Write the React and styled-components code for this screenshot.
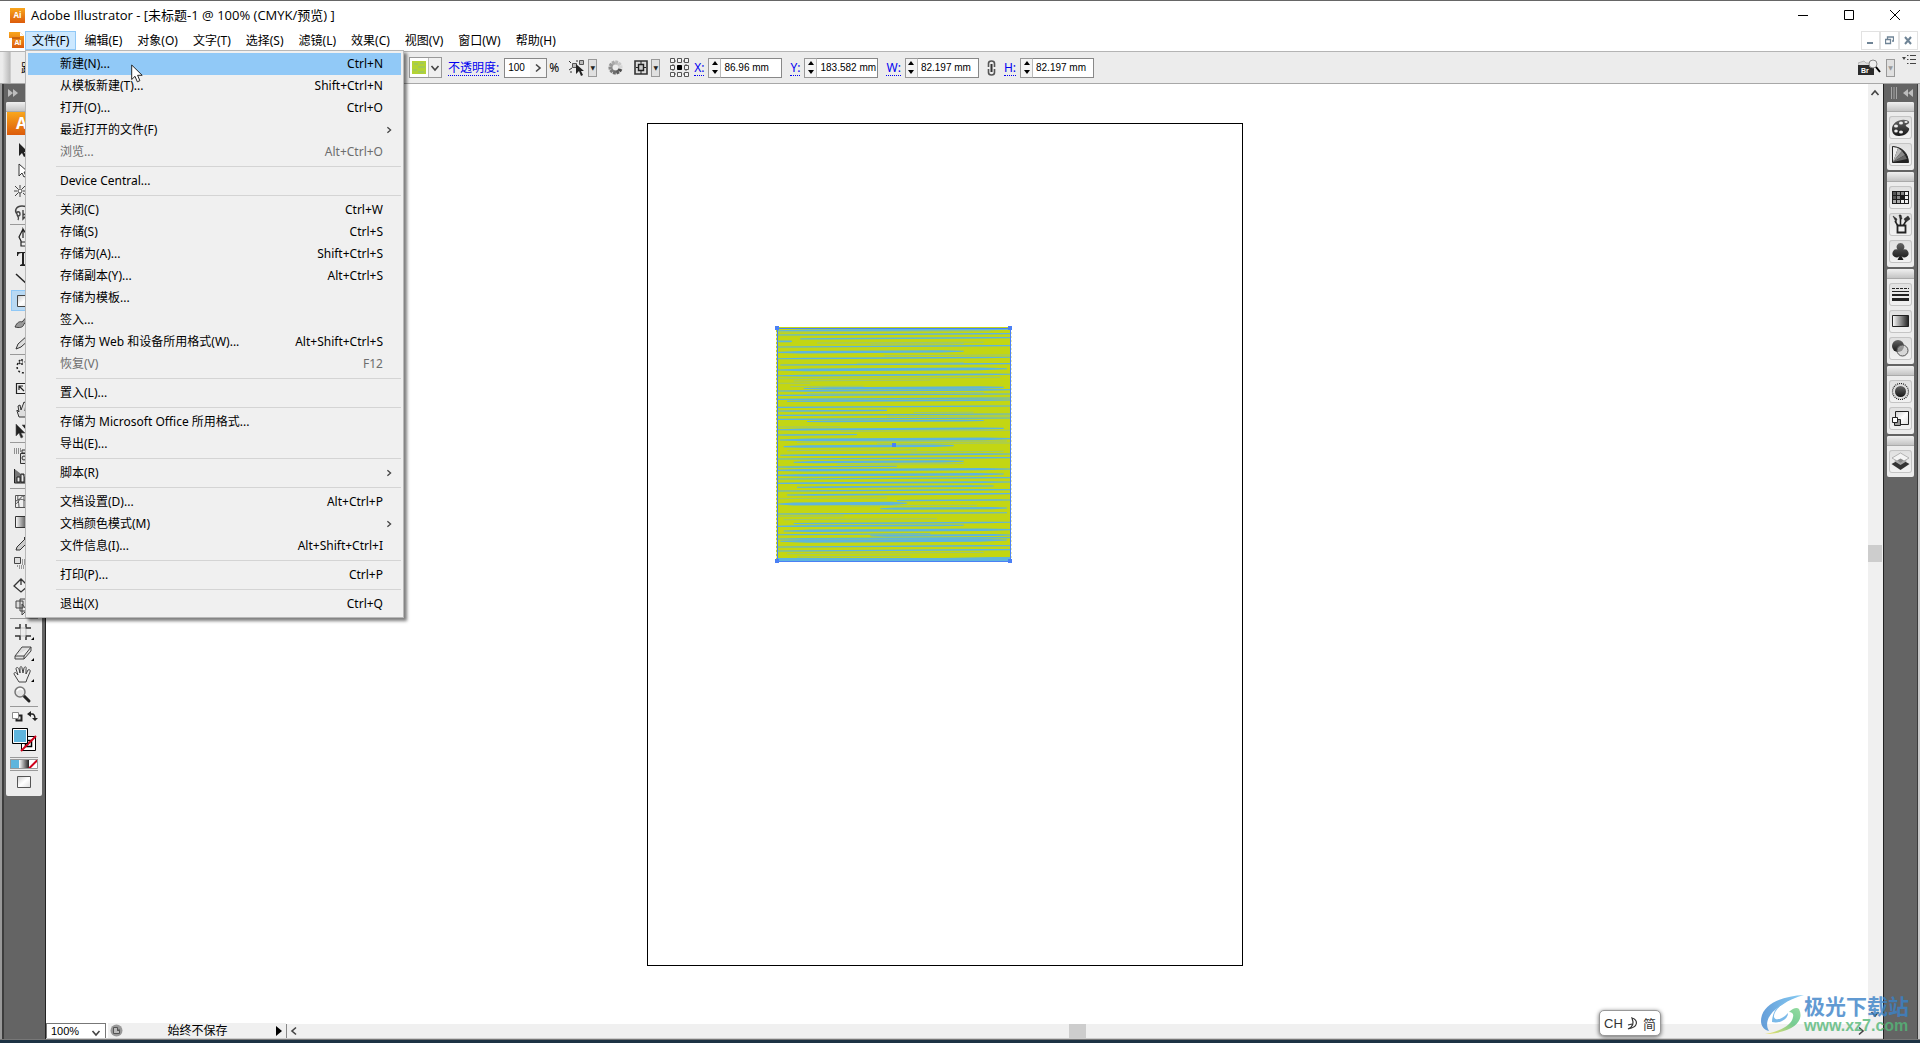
import React from 'react'
import styled, { createGlobalStyle } from 'styled-components'

const menus = [
  '文件(F)', '编辑(E)', '对象(O)', '文字(T)', '选择(S)',
  '滤镜(L)', '效果(C)', '视图(V)', '窗口(W)', '帮助(H)',
]

const fileMenu = [
  [
    { label: '新建(N)...', keys: 'Ctrl+N', active: true },
    { label: '从模板新建(T)...', keys: 'Shift+Ctrl+N' },
    { label: '打开(O)...', keys: 'Ctrl+O' },
    { label: '最近打开的文件(F)', sub: true },
    { label: '浏览...', keys: 'Alt+Ctrl+O', disabled: true },
  ],
  [{ label: 'Device Central...' }],
  [
    { label: '关闭(C)', keys: 'Ctrl+W' },
    { label: '存储(S)', keys: 'Ctrl+S' },
    { label: '存储为(A)...', keys: 'Shift+Ctrl+S' },
    { label: '存储副本(Y)...', keys: 'Alt+Ctrl+S' },
    { label: '存储为模板...' },
    { label: '签入...' },
    { label: '存储为 Web 和设备所用格式(W)...', keys: 'Alt+Shift+Ctrl+S' },
    { label: '恢复(V)', keys: 'F12', disabled: true },
  ],
  [{ label: '置入(L)...' }],
  [{ label: '存储为 Microsoft Office 所用格式...' }, { label: '导出(E)...' }],
  [{ label: '脚本(R)', sub: true }],
  [
    { label: '文档设置(D)...', keys: 'Alt+Ctrl+P' },
    { label: '文档颜色模式(M)', sub: true },
    { label: '文件信息(I)...', keys: 'Alt+Shift+Ctrl+I' },
  ],
  [{ label: '打印(P)...', keys: 'Ctrl+P' }],
  [{ label: '退出(X)', keys: 'Ctrl+Q' }],
]

// Drawn in a 26x21 box
const toolGroups = [
  [
    { name: '选择', art: <path d="M8 4v13l3-3 2 4 2-1-2-4h4z" fill="#222" /> },
    { name: '直接选择', art: <path d="M8 4v12l3-3 2 4 2-1-2-4h4z" fill="#fff" stroke="#333" /> },
    {
      name: '魔棒',
      art: (
        <g stroke="#444" fill="none">
          <path d="M9 4v3M9 12v4M3 10h3M12 10h4M4 5l3 3M14 5l-3 3M4 15l3-3M12 12l8 7" />
          <circle cx="9" cy="10" r="2" fill="#fff" />
        </g>
      ),
    },
    {
      name: '套索',
      art: <path d="M6 12c-3-3-1-8 5-8s9 3 7 7c-1 2-4 2-6 1M6 12c-1-3 3-3 3 0s-3 2-3 0c0 3 3 3 1 6M12 8v9l3-3" fill="none" stroke="#444" strokeWidth="1.4" />,
    },
  ],
  [
    {
      name: '钢笔',
      art: <path d="M12 2l-4 8 2 4v5h5v-5l2-4-5-8v9M10 15h5" fill="#eee" stroke="#222" strokeWidth="1.2" />,
    },
    { name: '文字', art: <path d="M6 4h12v4h-1c0-2-1-3-4-3v11l2 1v1H9v-1l2-1V5C8 5 7 6 7 8H6z" fill="#222" /> },
    { name: '直线段', art: <path d="M5 5l13 12" stroke="#222" strokeWidth="1.5" /> },
    { name: '矩形', on: true, art: <path d="M6.500 5.500h13v11h-13z" fill="url(#light)" stroke="#444" /> },
    { name: '画笔', art: <path d="M4 16c2-5 5-6 7-5l7-8 2 2-7 8c-1 4-5 4-9 3z" fill="#999" stroke="#222" strokeWidth=".8" /> },
    { name: '铅笔', art: <path d="M5 17l2-5L17 3l3 3-10 9z" fill="#ddd" stroke="#333" /> },
  ],
  [
    { name: '旋转', art: <path d="M7 6c-3 6 2 12 8 9s3-12-4-10M11 2v6L7 5z" fill="none" stroke="#222" strokeWidth="1.5" strokeDasharray="2 2" /> },
    { name: '比例缩放', art: <path d="M5.500 5.500h12v10h-12zM13 13L8 8M8 12V8h4" fill="#eee" stroke="#222" strokeWidth="1.2" /> },
    { name: '变形', art: <path d="M6 12l2 6h7l4-9-2-1-3 4 1-8-2-1-3 8-1-5-2 1 1 6-2-2z" fill="#ddd" stroke="#333" /> },
    { name: '自由变换', art: <path d="M5 4v12l3-3 2 5 2-1-2-4h4zM11 5h8v10" fill="#222" stroke="#555" strokeWidth=".6" /> },
  ],
  [
    {
      name: '符号喷枪',
      art: (
        <g stroke="#333" fill="#ddd">
          <path d="M3 4h7M3 6h7M3 8h5" strokeDasharray="1 1" />
          <path d="M9.500 8.500h8v10h-8zM11 5h5v3h-5z" />
          <circle cx="13" cy="13" r="2" />
        </g>
      ),
    },
    { name: '图表', art: <path d="M3.500 3v14H22M6 11h3v5H6zM10 8h3v8h-3zM15 5h3v11h-3z" fill="#777" stroke="#222" /> },
  ],
  [
    { name: '网格', art: <path d="M4.500 4.500h13v12h-13zM4 13c5-1 4-8 9-8M8 16c0-5-2-8-1-12M5 10c5-4 8 0 12 0M13 4v12" fill="#eee" stroke="#555" /> },
    { name: '渐变', art: <path d="M4.500 4.500h14v11h-14z" fill="url(#ramp)" stroke="#333" /> },
    { name: '吸管', art: <path d="M5 17l1-3 8-8 3 3-8 8zM13 5l3-3 4 4-3 3z" fill="#ccc" stroke="#333" /> },
    {
      name: '混合',
      art: (
        <g stroke="#444">
          <path d="M3.500 3.500h6v6h-6z" fill="#ddd" />
          <path d="M6 12h9M8 14h9M11 6h5M11 8h7M11 10h9" strokeDasharray="1 1" />
        </g>
      ),
    },
    { name: '实时上色', art: <path d="M3 11l7-7 7 7-7 6zM10 4v6M17 11c3 3 2 6 1 6s-2-2-1-6z" fill="#eee" stroke="#333" strokeWidth="1.3" /> },
    { name: '实时上色选择', art: <path d="M5 5h7v7H5zM9 3h7v12H9zM11 8v11l3-3 4 1z" fill="#ddd" stroke="#444" /> },
  ],
  [
    {
      name: '裁剪区域',
      corner: true,
      art: (
        <g fill="none">
          <path d="M4 7h5V3M4 15h5v4M20 7h-5V3M20 15h-5v4" stroke="#333" strokeWidth="1.5" />
          <path d="M9.500 8v6M15 8v6M10 7h5M10 15h5" stroke="#bbb" />
        </g>
      ),
    },
    { name: '橡皮擦', corner: true, art: <path d="M4 14l7-9h9l-7 9zM4 14v3h9l7-8V5M13 14v3" fill="#ddd" stroke="#444" strokeLinejoin="round" /> },
    {
      name: '抓手',
      corner: true,
      art: <path d="M8 19l-5-8c0-2 2-2 3 0l1 1-2-6c0-2 2-2 3 0l1 4V5c0-2 2-2 2 0l1 5 1-5c1-2 3-1 2 1v5l2-4c1-1 3 0 2 2l-3 7-1 3z" fill="#eee" stroke="#444" />,
    },
    {
      name: '缩放',
      art: (
        <g>
          <path d="M12 11l6 6" stroke="#222" strokeWidth="3" strokeLinecap="round" />
          <circle cx="9" cy="8" r="5" fill="#e4e4e4" stroke="#777" strokeWidth="1.5" />
          <path d="M6 7q3-4 6-1" stroke="#fff" fill="none" strokeWidth="1.5" />
        </g>
      ),
    },
  ],
]

// Drawn in a 23x23 box
const panelGroups = [
  [
    {
      name: '颜色',
      art: (
        <g>
          <path d="M3 13c0-6 7-10 13-9 2 0 5 1 4 3s-4 1-3 3 4 1 3 4-5 6-10 6-7-3-7-7z" fill="url(#dark)" />
          <g fill="#eee">
            <ellipse cx="7" cy="10" rx="2" ry="1.600" />
            <ellipse cx="12" cy="7" rx="2" ry="1.500" />
            <ellipse cx="17" cy="6" rx="1.600" ry="1.100" />
            <ellipse cx="7" cy="15" rx="1.800" ry="1.600" />
            <ellipse cx="12" cy="16" rx="2" ry="1.600" />
          </g>
        </g>
      ),
    },
    {
      name: '颜色参考',
      art: (
        <g>
          <path d="M3.500 3.500v16h16C19 10 13 4 3.500 3.500z" fill="#222" stroke="#222" />
          <path d="M4 19V4l5 1z" fill="#eee" />
          <path d="M4 19L9 5l4 3z" fill="#bbb" />
          <path d="M4 19l9-11 3 4z" fill="#888" />
          <path d="M4 19l12-7 2 4z" fill="#666" />
        </g>
      ),
    },
  ],
  [
    {
      name: '色板',
      art: (
        <g>
          <path d="M3 5h17v13H3z" fill="#1c1c1c" />
          <path d="M4 6h3v3H4zM4 10h3v3H4z" fill="#555" />
          <path d="M8 6h3v3H8zM12 6h3v3h-3zM8 10h3v3H8z" fill="#888" />
          <path d="M16 6h3v3h-3zM12 14h3v3h-3zM16 14h3v3h-3zM16 10h3v3h-3z" fill="#eee" />
          <path d="M4 14h3v3H4zM8 14h3v3H8z" fill="#aaa" />
        </g>
      ),
    },
    {
      name: '画笔',
      art: (
        <g stroke="#222" fill="#333">
          <path d="M9 13L6 8M11.500 13V6M14 13l3-5" strokeWidth="1.500" />
          <path d="M4 3l4 3-1 3zM10 2h2l1 4h-2zM15 6l4-3 2 3-4 3z" strokeWidth=".5" />
          <path d="M8.500 12.500h8v7h-8z" fill="#eee" strokeWidth="1.800" />
        </g>
      ),
    },
    {
      name: '符号',
      art: <path d="M11.500 3a4 4 0 0 1 3 6.500 4 4 0 1 1-2 6.500l2 4h-6l2-4a4 4 0 1 1-2-6.500 4 4 0 0 1 3-6.500z" fill="url(#dark)" />,
    },
  ],
  [
    {
      name: '描边',
      art: (
        <g stroke="#222">
          <path d="M3 5.500h17" strokeDasharray="3 1" />
          <path d="M3 8.500h17" />
          <path d="M3 12h17" strokeWidth="2" />
          <path d="M3 16.500h17" strokeWidth="3" />
        </g>
      ),
    },
    { name: '渐变', art: <path d="M3.500 5.500h16v11h-16z" fill="url(#ramp)" stroke="#222" /> },
    {
      name: '透明度',
      art: (
        <g>
          <circle cx="9" cy="9" r="6" fill="url(#dark)" />
          <circle cx="13.500" cy="13.500" r="5.500" fill="#ccc" fillOpacity=".65" stroke="#555" />
        </g>
      ),
    },
  ],
  [
    {
      name: '外观',
      art: (
        <g>
          <circle cx="11.500" cy="11.500" r="8" fill="#ddd" stroke="#222" strokeDasharray="1 1" strokeWidth="1.200" />
          <circle cx="11.500" cy="11.500" r="5.500" fill="url(#dark)" />
        </g>
      ),
    },
    {
      name: '图形样式',
      art: (
        <g stroke="#222">
          <path d="M6.500 4.500h13v13h-13z" fill="url(#light)" />
          <path d="M5.500 12.500h6v6h-6z" fill="#999" />
          <path d="M3.500 10.500h5v5h-5z" fill="#fff" />
        </g>
      ),
    },
  ],
  [
    {
      name: '图层',
      art: (
        <g>
          <path d="M2.500 14l9-5 9 5-9 6z" fill="#333" />
          <path d="M5 11l6.500-4 6.500 4-6.500 4z" fill="#aaa" />
          <path d="M3 8l8.500-5L20 8l-8.500 5z" fill="#f4f4f4" stroke="#999" strokeWidth=".7" />
          <path d="M8 10.500l3.500-2 3.500 2-3.500 2.500z" fill="#888" />
        </g>
      ),
    },
  ],
]

// [y, start, end, thickness, faint]
const strands = [
  [6, 0, 700, 5], [10, 0, 640, 2, 1], [19, 0, 700, 3], [31, 70, 700, 3], [38, 4, 45, 4], [44, 120, 620, 3, 1],
  [48, 280, 560, 2, 1], [55, 0, 700, 3], [71, 4, 560, 6], [83, 320, 700, 3, 1], [90, 0, 700, 3],
  [105, 240, 560, 2, 1], [109, 10, 700, 3], [124, 0, 690, 7], [141, 0, 700, 4], [150, 0, 670, 3, 1],
  [157, 50, 460, 3, 1], [164, 0, 100, 2, 1], [174, 40, 260, 3, 1],
  [180, 80, 680, 6], [187, 0, 700, 4], [195, 90, 620, 2, 1], [200, 0, 700, 3], [212, 0, 700, 3], [218, 30, 700, 4],
  [236, 0, 700, 3], [247, 0, 330, 3], [254, 410, 590, 2, 1], [260, 0, 700, 3],
  [266, 330, 700, 3, 1], [272, 0, 700, 3], [279, 90, 620, 4], [295, 0, 190, 3, 1],
  [303, 0, 680, 5], [309, 190, 700, 3, 1], [319, 0, 240, 3], [334, 8, 700, 7], [341, 60, 690, 2, 1],
  [347, 300, 700, 4, 1], [354, 20, 530, 6], [366, 30, 420, 2, 1], [372, 400, 680, 2, 1], [380, 10, 700, 4],
  [391, 0, 700, 3], [401, 50, 560, 5], [408, 180, 560, 2, 1], [415, 0, 360, 3], [425, 0, 700, 6],
  [440, 0, 680, 6], [451, 0, 700, 3], [464, 0, 700, 4],
  [476, 60, 650, 4], [487, 0, 700, 3], [499, 30, 700, 4], [510, 0, 330, 2, 1], [518, 360, 700, 3],
  [526, 4, 390, 8], [533, 220, 600, 3, 1], [542, 310, 690, 6], [556, 0, 690, 3], [563, 0, 200, 3, 1],
  [573, 20, 480, 3, 1], [585, 50, 700, 3], [593, 0, 560, 4], [607, 20, 700, 6], [618, 0, 460, 3],
  [623, 280, 700, 5], [631, 0, 700, 4], [638, 10, 690, 8], [655, 0, 700, 3],
  [667, 0, 700, 3], [675, 30, 620, 4, 1], [685, 60, 400, 2, 1],
]

// a flat stroke that rises a little to the right and thins out at both ends
const strandPath = ([y, a, b, t, faint]) => {
  const at = (x) => y + (350 - x) / 170
  const h = faint ? 1.5 : t / 2 + 0.6
  const p = a + (b - a) * 0.12
  const q = b - (b - a) * 0.12
  const tip = Math.min(h, 1.6)
  return `M${a} ${at(a) - tip}L${p} ${at(p) - h}L${q} ${at(q) - h}L${b} ${at(b) - tip}V${at(b) + tip}L${q} ${at(q) + h}L${p} ${at(p) + h}L${a} ${at(a) + tip}z`
}

const Chevron = ({ turn = 0, size = 10, color = '#444' }) => (
  <svg width={size} height={size} viewBox="0 0 10 10">
    <path d="M1.500 3l3.500 4 3.500-4" fill="none" stroke={color} strokeWidth="1.600" transform={`rotate(${turn} 5 5)`} />
  </svg>
)

const AiMark = () => (
  <svg width="15" height="15" viewBox="0 0 15 15">
    <rect width="15" height="15" fill="url(#orange)" />
    <text x="7.500" y="10" textAnchor="middle" fontSize="8" fontWeight="700" fill="#fff" fontFamily="Open Sans, sans-serif">Ai</text>
  </svg>
)

const UnitField = ({ id, label, value }) => (
  <Unit>
    <BlueLabel htmlFor={id}>{label}:</BlueLabel>
    <Stepper>
      <StepButton aria-label={`${label} 增加`}><svg width="6" height="4"><path d="M0 4l3-4 3 4z" /></svg></StepButton>
      <StepButton aria-label={`${label} 减少`}><svg width="6" height="4"><path d="M0 0l3 4 3-4z" /></svg></StepButton>
    </Stepper>
    <UnitInput id={id} defaultValue={value} />
  </Unit>
)

const FileMenu = () => (
  <Dropdown role="menu">
    {fileMenu.map((group, i) => (
      <MenuGroup key={i}>
        {group.map((item) => (
          <MenuRow key={item.label} role="menuitem" $active={item.active} disabled={item.disabled}>
            <span>{item.label}</span>
            {item.keys && <span>{item.keys}</span>}
            {item.sub && <SubArrow><Chevron turn={-90} size={8} /></SubArrow>}
          </MenuRow>
        ))}
      </MenuGroup>
    ))}
  </Dropdown>
)

const Toolbox = () => (
  <ToolPanel>
    <Grip />
    <ToolLogo>Ai</ToolLogo>
    {toolGroups.map((group, i) => (
      <ToolGroup key={i}>
        {group.map((tool) => (
          <ToolButton key={tool.name} aria-label={tool.name} $on={tool.on}>
            <svg width="26" height="21" viewBox="0 0 26 21" fill="none">
              {tool.art}
              {tool.corner && <path d="M23 16v3h-3z" fill="#000" />}
            </svg>
          </ToolButton>
        ))}
      </ToolGroup>
    ))}
    <Swatches>
      <svg width="28" height="46" viewBox="0 0 28 46">
        <path d="M6.500 5.500h5v5h-5z" fill="#ddd" stroke="#222" strokeWidth="2" />
        <path d="M2.500 2.500h6v6h-6z" fill="#fff" stroke="#888" />
        <path d="M20 4h2q3 0 3 5" fill="none" stroke="#222" strokeWidth="1.400" />
        <path d="M21 1v6l-4-3zM22 8h6l-3 3z" fill="#222" />
        <path d="M11.500 26.500h14v14h-14z" fill="#fff" stroke="#000" />
        <path d="M15.500 30.500h6v6h-6z" fill="none" stroke="#000" strokeWidth="1.500" />
        <path d="M11 41l15-15" stroke="#d0021b" strokeWidth="2" />
        <path d="M2.500 18.500h15v15h-15z" fill="#5fb5dd" stroke="#000" />
        <path d="M3.500 19.500h13v13h-13z" fill="none" stroke="#fff" />
      </svg>
    </Swatches>
    <Swatches>
      <svg width="28" height="10" viewBox="0 0 28 10">
        <path d="M0 0h9v10H0z" fill="#5fb5dd" />
        <path d="M9 0h10v10H9z" fill="url(#ramp)" />
        <path d="M19 0h9v10h-9z" fill="#fff" />
        <path d="M19 9.500l9-9" stroke="#d0021b" strokeWidth="2" />
        <path d="M.500.500h27v9H.500z" fill="none" stroke="#999" />
      </svg>
    </Swatches>
    <Swatches>
      <svg width="28" height="16" viewBox="0 0 28 16">
        <path d="M7.500 2.500h13v11h-13z" fill="url(#light)" stroke="#555" />
      </svg>
    </Swatches>
  </ToolPanel>
)

export default function App() {
  return (
    <Window>
      <GlobalStyle />
      <Defs width="0" height="0" aria-hidden="true">
        <defs>
          <linearGradient id="ramp"><stop stopColor="#fff" /><stop offset="1" stopColor="#222" /></linearGradient>
          <linearGradient id="light" x2="1" y2="1"><stop stopColor="#ccc" /><stop offset=".5" stopColor="#fff" /><stop offset="1" stopColor="#ddd" /></linearGradient>
          <linearGradient id="dark" x2="0" y2="1"><stop stopColor="#666" /><stop offset="1" stopColor="#151515" /></linearGradient>
          <linearGradient id="orange" x2="0" y2="1"><stop stopColor="#f9a61c" /><stop offset="1" stopColor="#dc5b0b" /></linearGradient>
          <linearGradient id="swirlBlue" x2="1"><stop stopColor="#3f86d0" /><stop offset="1" stopColor="#6cc3f2" /></linearGradient>
          <linearGradient id="swirlGreen" x2="1" y2="0" y1="1"><stop stopColor="#f3e04a" /><stop offset=".6" stopColor="#55c07a" /><stop offset="1" stopColor="#7bd48a" /></linearGradient>
        </defs>
      </Defs>

      <TitleBar>
        <AiMark />
        <Title>Adobe Illustrator - [未标题-1 @ 100% (CMYK/预览) ]</Title>
        <WindowButtons>
          <WindowButton aria-label="最小化"><svg width="11" height="11"><path d="M0 5.500h10" stroke="#000" /></svg></WindowButton>
          <WindowButton aria-label="最大化"><svg width="11" height="11"><path d="M.500.500h9v9h-9z" fill="none" stroke="#000" /></svg></WindowButton>
          <WindowButton aria-label="关闭"><svg width="11" height="11"><path d="M0 0l10 10M10 0L0 10" stroke="#000" /></svg></WindowButton>
        </WindowButtons>
      </TitleBar>

      <MenuBar>
        <DocMark width="16" height="17" viewBox="0 0 16 17">
          <path d="M0 0h11l4 4v12H3V6H0z" fill="url(#orange)" />
          <path d="M11 0v4h4z" fill="#fff" />
          <path d="M3 6h8" stroke="#a43f08" />
          <text x="9" y="13" textAnchor="middle" fontSize="7" fontWeight="700" fill="#fff" fontFamily="Open Sans, sans-serif">Ai</text>
        </DocMark>
        <MenuList>
          {menus.map((name, i) => (
            <MenuSlot key={name}>
              <MenuButton $open={i === 0}>{name}</MenuButton>
              {i === 0 && <FileMenu />}
            </MenuSlot>
          ))}
        </MenuList>
        <DocButtons>
          <DocButton aria-label="最小化文档"><svg width="9" height="9"><path d="M1 7h6" stroke="#6f8496" strokeWidth="2" /></svg></DocButton>
          <DocButton aria-label="还原文档"><svg width="9" height="9"><path d="M2.500 3V1h6v4H7M.500 3.500h5v4h-5z" fill="none" stroke="#6f8496" strokeWidth="1.300" /></svg></DocButton>
          <DocButton aria-label="关闭文档"><svg width="9" height="9"><path d="M1 1l6 7M7 1L1 8" stroke="#6f8496" strokeWidth="2" /></svg></DocButton>
        </DocButtons>
        <Cursor width="13" height="20" viewBox="0 0 13 20">
          <path d="M.700 1v14.500l3.300-3.200 2.300 5.500 2.600-1.100-2.300-5.400h4.600z" fill="#fff" stroke="#111" strokeWidth=".9" />
        </Cursor>
      </MenuBar>

      <OptionsBar>
        <BarGrip />
        <ObjectKind>路径</ObjectKind>
        <SwatchButton aria-label="样式">
          <StyleChip><svg width="14" height="13"><path d="M2 3h4M6 6h7M1 9h4M8 2h4M6 11h6" stroke="#8fbf7a" /></svg></StyleChip>
          <ChipArrow><Chevron /></ChipArrow>
        </SwatchButton>
        <BlueLabel htmlFor="opacity">不透明度:</BlueLabel>
        <OpacityBox>
          <OpacityInput id="opacity" defaultValue="100" />
          <OpacityArrow aria-label="不透明度滑块"><Chevron turn={-90} /></OpacityArrow>
        </OpacityBox>
        <Percent>%</Percent>
        <IconSlot>
          <svg width="17" height="18" viewBox="0 0 17 18">
            <path d="M3.500 4.500h4v4h-4zM10.500 1.500h4v4h-4z" fill="#bbb" stroke="#555" />
            <path d="M0 2l2 2M0 11l3-2M8 1v2M2 12v2" stroke="#333" />
            <path d="M7 5v10l3-3 2 5 2-1-2-4h3z" fill="#222" />
          </svg>
          <TinyDrop aria-label="选择类似的选项">▼</TinyDrop>
        </IconSlot>
        <IconSlot>
          <svg width="17" height="17" viewBox="0 0 17 17">
            {Array.from({ length: 10 }, (_, i) => (
              <path key={i} d="M8.500 1.500v4" stroke={`hsl(0 0% ${30 + i * 6}%)`} strokeWidth="3" transform={`rotate(${120 + i * 36} 8.500 8.500)`} />
            ))}
          </svg>
        </IconSlot>
        <IconSlot>
          <svg width="15" height="16" viewBox="0 0 15 16">
            <path d="M1 1h12v13H1z" fill="#ddd" stroke="#333" strokeWidth="1.600" />
            <path d="M4.500 4.500h5v6h-5z" fill="#ccc" stroke="#222" strokeWidth="1.400" />
            <path d="M7 1v3M7 11v3M2 7.500h2M10 7.500h2" stroke="#222" />
          </svg>
          <TinyDrop aria-label="对齐选项">▼</TinyDrop>
        </IconSlot>
        <IconSlot $wide>
          <svg width="19" height="19" viewBox="0 0 19 19">
            <path d="M3 3h13v13H3z" fill="none" stroke="#555" strokeDasharray="1 1" />
            {[0, 7, 14].map((x) => [0, 7, 14].map((y) => (
              <path key={`${x}-${y}`} d={`M${x + 0.5} ${y + 0.5}h4v4h-4z`} fill={x === 7 && y === 7 ? '#000' : '#f5f5f5'} stroke={x === 7 && y === 7 ? '#000' : '#555'} />
            )))}
          </svg>
          <UnitField id="pos-x" label="X" value="86.96 mm" />
        </IconSlot>
        <UnitField id="pos-y" label="Y" value="183.582 mm" />
        <UnitField id="size-w" label="W" value="82.197 mm" />
        <svg width="9" height="16" viewBox="0 0 9 16">
          <path d="M1.500 7V3.500q0-2.500 3-2.500t3 2.500V7M1.500 9v3.500q0 2.500 3 2.500t3-2.500V9" fill="none" stroke="#555" strokeWidth="1.600" />
          <path d="M4.500 4v8" stroke="#333" strokeWidth="2" />
        </svg>
        <UnitField id="size-h" label="H" value="82.197 mm" />
        <BarEnd>
          <svg width="23" height="18" viewBox="0 0 23 18">
            <path d="M0 4l6-2 2 2h9v3H0z" fill="#ddd" stroke="#999" strokeWidth=".6" />
            <path d="M0 6h16v10H0z" fill="#2b2b2b" />
            <text x="3" y="14" fontSize="7" fontWeight="700" fill="#fff" fontFamily="Liberation Sans, sans-serif">Br</text>
            <circle cx="15" cy="5" r="4" fill="#eee" stroke="#888" />
            <path d="M18 8l4 5" stroke="#000" strokeWidth="2" />
          </svg>
          <TinyDrop disabled aria-label="Bridge 选项">▼</TinyDrop>
          <PanelMenu aria-label="面板菜单">
            <svg width="14" height="9" viewBox="0 0 14 9">
              <path d="M0 2h4L2 5z" fill="#444" />
              <path d="M5 .500h1.500M5 4.500h1.500M5 8.500h1.500M8 .500h6M8 4.500h6M8 8.500h6" stroke="#444" />
            </svg>
          </PanelMenu>
        </BarEnd>
      </OptionsBar>

      <Workspace>
        <LeftDock>
          <DockHead>
            <svg width="10" height="8"><path d="M0 0l5 4-5 4zM5 0l5 4-5 4z" fill="#bdbdbd" /></svg>
          </DockHead>
          <Toolbox />
        </LeftDock>

        <Document>
          <CanvasRow>
            <Canvas>
              <Artboard />
              <Shape width="236" height="236" viewBox="-3 -3 708 708">
                <path d="M-3-3h705v705H-3z" fill="#c3d613" />
                {strands.map((s, i) => (
                  <path key={i} d={strandPath(s)} fill={s[4] ? '#9cc772' : '#5fb5dd'} />
                ))}
                <path d="M0 690h500l150-3h50v15H0z" fill="#5fb5dd" />
                <path d="M1.500 1.500h699v699h-699z" fill="none" stroke="#4a80f5" strokeWidth="3" />
                <path d="M-1.500 12v678M703.500 12v678" stroke="#e8ebb0" strokeWidth="3" strokeDasharray="6 6" />
                <path d="M-6-6H6V6H-6zM693-6h12V6h-12zM-6 693H6v12H-6zM693 693h12v12h-12zM345 345h12v12h-12z" fill="#4a80f5" />
              </Shape>
            </Canvas>
            <VScroll>
              <ScrollButton aria-label="向上滚动"><Chevron turn={180} /></ScrollButton>
              <VThumb />
              <ScrollButton aria-label="向下滚动"><Chevron /></ScrollButton>
            </VScroll>
          </CanvasRow>
          <StatusBar>
            <ZoomBox>
              <ZoomSelect aria-label="缩放" defaultValue="100%"><option>100%</option></ZoomSelect>
              <ZoomArrow><Chevron /></ZoomArrow>
            </ZoomBox>
            <Status>
              <svg width="13" height="13" viewBox="0 0 13 13">
                <circle cx="6.500" cy="6.500" r="6" fill="#999" />
                <path d="M3.500 9.500v-6h4v3h2v3zM7 6h3" fill="#bbb" stroke="#555" />
              </svg>
              <StatusText>始终不保存</StatusText>
              <svg width="6" height="10"><path d="M0 0l6 5-6 5z" /></svg>
            </Status>
            <HScroll>
              <ScrollButton aria-label="向左滚动"><Chevron turn={90} /></ScrollButton>
              <HThumb />
              <ScrollButton aria-label="向右滚动"><Chevron turn={-90} /></ScrollButton>
            </HScroll>
            <Corner />
          </StatusBar>
        </Document>

        <RightDock>
          <DockHead $right>
            <svg width="7" height="12"><path d="M1.500 0v12M4 0v12M6.500 0v12" stroke="#a5a5a5" /></svg>
            <svg width="10" height="8"><path d="M5 0L0 4l5 4zM10 0L5 4l5 4z" fill="#bdbdbd" /></svg>
          </DockHead>
          {panelGroups.map((group, i) => (
            <PanelGroup key={i}>
              <Grip />
              <PanelList>
                {group.map((panel) => (
                  <PanelButton key={panel.name} aria-label={panel.name}>
                    <svg width="23" height="23" viewBox="0 0 23 23">{panel.art}</svg>
                  </PanelButton>
                ))}
              </PanelList>
            </PanelGroup>
          ))}
        </RightDock>
      </Workspace>
      <TaskbarEdge />

      <ImeBadge>
        <span>CH</span>
        <svg width="12" height="13" viewBox="0 0 12 13">
          <path d="M5 1c6 2 7 9-4 11 5-2 6-6 4-11zM1 8l4-1" fill="none" stroke="#333" strokeWidth="1.200" />
        </svg>
        <span>简</span>
      </ImeBadge>

      <Watermark>
        <svg width="43" height="40" viewBox="0 0 43 40">
          <path d="M43 0C20 1 0 10 0 26c0 5 3 9 8 10-5-8 0-19 13-26C28 5 35 2 43 0z" fill="url(#swirlBlue)" />
          <path d="M36 2C22 6 12 16 13 22c1 4 8 3 14-4 0 6-8 11-16 9C11 15 20 5 36 2z" fill="#5aa9e4" />
          <path d="M38 14c6 12-6 24-34 25 16-3 27-9 28-17 1-3-1-5-4-5 4-4 8-5 10-3z" fill="url(#swirlGreen)" />
        </svg>
        <WatermarkText>
          <strong>极光下载站</strong>
          <em>www.xz7.com</em>
        </WatermarkText>
      </Watermark>
    </Window>
  )
}

const ui = `'Noto Sans', 'Noto Sans CJK SC', sans-serif`

const GlobalStyle = createGlobalStyle`
  * {
    box-sizing: border-box;
  }

  body {
    margin: 0;
    overflow: hidden;
    font-family: ${ui};
    font-size: 12px;
    color: #000;
  }

  button, input, select {
    margin: 0;
    padding: 0;
    border: 0;
    background: none;
    font: inherit;
    color: inherit;
  }

  svg {
    display: block;
    flex: none;
  }
`;

const Window = styled.div`
  position: relative;
  display: flex;
  flex-direction: column;
  height: 100vh;
  background: #fff;
  border-top: 1px solid #666;
`;

const Defs = styled.svg`
  position: absolute;
`;

const TitleBar = styled.header`
  display: flex;
  align-items: center;
  height: 30px;
  padding: 0 2px 2px 10px;
`;

const Title = styled.h1`
  flex: 1;
  margin: 0 0 0 6px;
  font-family: 'Open Sans', 'Noto Sans CJK SC', sans-serif;
  font-size: 13px;
  font-weight: 400;
  line-height: 20px;
`;

const WindowButtons = styled.div`
  display: flex;
`;

const WindowButton = styled.button`
  display: flex;
  align-items: center;
  justify-content: center;
  width: 46px;
  height: 28px;
`;

const MenuBar = styled.nav`
  position: relative;
  z-index: 20;
  display: flex;
  height: 20px;
  padding: 0 2px 0 9px;
`;

const DocMark = styled.svg`
  margin-top: 1px;
`;

const MenuList = styled.div`
  display: flex;
  gap: 1px;
`;

const MenuSlot = styled.div`
  position: relative;
`;

const MenuButton = styled.button`
  height: 19px;
  padding: 0 6px;
  line-height: 17px;
  white-space: nowrap;
  border: 1px solid ${(props) => (props.$open ? '#90c8f6' : 'transparent')};
  background: ${(props) => (props.$open ? '#cce8ff' : 'transparent')};
`;

const Dropdown = styled.div`
  position: absolute;
  top: 19px;
  left: 0;
  width: 379px;
  padding: 2px;
  background: #f0f0f0;
  border: 1px solid #b8b8b8;
  box-shadow: 3px 3px 3px rgba(0, 0, 0, 0.5);
`;

const MenuGroup = styled.div`
  & + & {
    padding-top: 3px;
  }

  & + &::before {
    content: '';
    display: block;
    height: 1px;
    margin: 0 0 3px 28px;
    background: #d4d4d4;
  }
`;

const MenuRow = styled.button`
  display: flex;
  align-items: center;
  justify-content: space-between;
  width: 100%;
  height: 22px;
  padding: 0 18px 0 32px;
  line-height: 22px;
  text-align: left;
  white-space: nowrap;
  color: ${(props) => (props.disabled ? '#6d6d6d' : '#000')};
  background: ${(props) => (props.$active ? '#91c9f7' : 'transparent')};
`;

const SubArrow = styled.span`
  margin-right: -10px;
`;

const DocButtons = styled.div`
  display: flex;
  margin-left: auto;
`;

const DocButton = styled.button`
  display: flex;
  align-items: center;
  justify-content: center;
  width: 19px;
  height: 19px;
  border: 1px solid #e2e2e2;
`;

const Cursor = styled.svg`
  position: absolute;
  top: 33px;
  left: 131px;
`;

const OptionsBar = styled.div`
  display: flex;
  align-items: center;
  height: 33px;
  padding: 0 2px;
  background: #ececec;
  border-top: 1px solid #b4b4b4;
  border-bottom: 1px solid #a8a8a8;
  gap: 8px;
`;

const BarGrip = styled.div`
  width: 9px;
  height: 31px;
  background: linear-gradient(90deg, #eee, #bbb);
  border-right: 1px solid #ccc;
`;

const ObjectKind = styled.span`
  width: 382px;
  padding-left: 2px;
`;

const SwatchButton = styled.button`
  display: flex;
  align-items: center;
  height: 21px;
  margin-right: -2px;
  border: 1px solid #999;
  background: #fff;
`;

const StyleChip = styled.span`
  margin: 0 2px;
  background: #b3d334;
`;

const ChipArrow = styled.span`
  display: flex;
  align-items: center;
  height: 19px;
  padding: 0 1px;
  background: #f0f0f0;
  border-left: 1px solid #bbb;
`;

const BlueLabel = styled.label`
  line-height: 15px;
  color: #0000f0;
  border-bottom: 1px dotted #0000f0;
  white-space: nowrap;
`;

const OpacityBox = styled.div`
  display: flex;
  height: 20px;
  margin-left: -3px;
  border: 1px solid #888;
`;

const OpacityInput = styled.input`
  width: 25px;
  padding-left: 3px;
  background: #fff;
  font: 10px 'Liberation Sans', sans-serif;
`;

const OpacityArrow = styled.button`
  display: flex;
  align-items: center;
  justify-content: center;
  width: 16px;
  background: #f4f4f4;
`;

const Percent = styled.span`
  margin: 0 2px 0 -6px;
`;

const IconSlot = styled.div`
  display: flex;
  align-items: center;
  gap: ${(props) => (props.$wide ? '5px' : '2px')};
  margin-right: ${(props) => (props.$wide ? '0' : '2px')};
`;

const TinyDrop = styled.button`
  width: 9px;
  height: 18px;
  border: 1px solid #999;
  background: #e0e0e0;
  font: 6px 'DejaVu Sans', sans-serif;
  color: ${(props) => (props.disabled ? '#999' : '#222')};
`;

const Unit = styled.div`
  display: flex;
  align-items: center;
`;

const Stepper = styled.div`
  display: flex;
  flex-direction: column;
  justify-content: center;
  width: 12px;
  height: 20px;
  margin-left: 4px;
  border: 1px solid #999;
  border-right: 0;
  background: #f4f4f4;
`;

const StepButton = styled.button`
  display: flex;
  align-items: center;
  justify-content: center;
  height: 9px;
`;

const UnitInput = styled.input`
  width: 62px;
  height: 20px;
  padding-left: 3px;
  border: 1px solid #888;
  border-left-color: #bbb;
  background: #fff;
  font: 10px 'Liberation Sans', sans-serif;
`;

const BarEnd = styled.div`
  display: flex;
  align-items: center;
  gap: 5px;
  margin-left: auto;
`;

const PanelMenu = styled.button`
  align-self: flex-start;
  margin: -4px 2px 0 2px;
`;

const Workspace = styled.main`
  display: flex;
  flex: 1;
  min-height: 0;
`;

const LeftDock = styled.aside`
  width: 46px;
  padding: 0 3px 0 6px;
  background: #646464;
  border-right: 1px solid #222;
  box-shadow: inset 2px 0 #999, inset 4px 0 #3c3c3c;
`;

const RightDock = styled.aside`
  width: 37px;
  padding: 0 5px 0 3px;
  background: #646464;
  border-left: 1px solid #222;
  box-shadow: inset -2px 0 #c8c8c8, inset -3px 0 #3c3c3c;
`;

const DockHead = styled.div`
  display: flex;
  align-items: center;
  justify-content: ${(props) => (props.$right ? 'flex-end' : 'flex-start')};
  gap: 6px;
  height: 18px;
  padding: 0 2px;
`;

const Grip = styled.div`
  height: 10px;
  background: linear-gradient(#f0f0f0, #c4c4c4);
  border-bottom: 1px solid #aaa;
  border-radius: 2px 2px 0 0;
`;

const ToolPanel = styled.div`
  width: 36px;
  background: #ececec;
  border-radius: 2px;
`;

const ToolLogo = styled.div`
  height: 23px;
  margin: 0 1px 4px;
  background: linear-gradient(#f9a61c, #dc5b0b);
  color: #fff;
  font-size: 16px;
  font-weight: 700;
  line-height: 22px;
  text-align: center;
`;

const ToolGroup = styled.div`
  display: flex;
  flex-direction: column;
  margin: 0 4px;
  padding: 0 1px;

  &::after {
    content: '';
    height: 1px;
    margin: 1px -1px 2px;
    background: #999;
  }
`;

const ToolButton = styled.button`
  height: 21px;
  background: ${(props) => (props.$on ? '#b9d9f3' : 'transparent')};
  box-shadow: ${(props) => (props.$on ? 'inset 0 0 0 1px #90c8f6' : 'none')};
`;

const Swatches = styled.div`
  margin: 0 4px;
  padding: 1px 0;
  border-bottom: 1px solid #999;

  &:last-child {
    padding: 3px 0 6px;
    border-bottom: 0;
  }
`;

const PanelGroup = styled.section`
  width: 27px;
  margin-bottom: 2px;
  background: #ececec;
  border-radius: 2px;
`;

const PanelList = styled.div`
  display: flex;
  flex-direction: column;
  gap: 4px;
  padding: 4px 2px;
`;

const PanelButton = styled.button`
  width: 23px;
  height: 23px;
  background: linear-gradient(#e0e0e0, #f2f2f2);
  border-radius: 3px;
  box-shadow: inset 0 0 0 1px #c4c4c4;
`;

const Document = styled.section`
  display: flex;
  flex: 1;
  flex-direction: column;
  min-width: 0;
`;

const CanvasRow = styled.div`
  display: flex;
  flex: 1;
  min-height: 0;
`;

const Canvas = styled.div`
  position: relative;
  flex: 1;
  overflow: hidden;
  background: #fff;
`;

const Artboard = styled.div`
  position: absolute;
  top: 39px;
  left: 601px;
  width: 596px;
  height: 843px;
  border: 1px solid #000;
`;

const Shape = styled.svg`
  position: absolute;
  top: 243px;
  left: 730px;
  overflow: visible;
`;

const VScroll = styled.div`
  display: flex;
  flex-direction: column;
  justify-content: space-between;
  width: 15px;
  padding-right: 1px;
  background: #f0f0f0;
`;

const ScrollButton = styled.button`
  display: flex;
  align-items: center;
  justify-content: center;
  width: 14px;
  height: 18px;
`;

const VThumb = styled.div`
  height: 17px;
  background: #cdcdcd;
`;

const StatusBar = styled.footer`
  display: flex;
  height: 16px;
  background: #fff;
  border-bottom: 1px solid #ccc;
`;

const ZoomBox = styled.div`
  position: relative;
  width: 60px;
  border: 1px solid #777;
  border-bottom: 0;
`;

const ZoomSelect = styled.select`
  display: block;
  width: 100%;
  height: 14px;
  padding-left: 4px;
  appearance: none;
  font: 11px/14px 'Liberation Sans', sans-serif;
`;

const ZoomArrow = styled.span`
  position: absolute;
  top: 4px;
  right: 4px;
  pointer-events: none;
`;

const Status = styled.div`
  display: flex;
  align-items: center;
  width: 178px;
  margin-left: 2px;
  padding: 0 4px 0 2px;
  background: #f0f0f0;
`;

const StatusText = styled.span`
  flex: 1;
  padding-right: 4px;
  text-align: center;
  line-height: 14px;
`;

const HScroll = styled.div`
  display: flex;
  flex: 1;
  align-items: center;
  justify-content: space-between;
  margin-top: 1px;
  background: #f0f0f0;
  border-left: 1px solid #888;
`;

const HThumb = styled.div`
  width: 17px;
  height: 100%;
  background: #cdcdcd;
`;

const Corner = styled.div`
  width: 15px;
  background: #f0f0f0;
`;

const TaskbarEdge = styled.div`
  height: 4px;
  background: #1c3244;
  border-top: 1px solid #777;
`;

const ImeBadge = styled.div`
  position: absolute;
  right: 259px;
  bottom: 7px;
  display: flex;
  align-items: center;
  justify-content: center;
  gap: 4px;
  width: 62px;
  height: 26px;
  background: #fff;
  border: 1px solid #999;
  border-radius: 5px;
  box-shadow: 0 1px 4px rgba(0, 0, 0, 0.6);
  font-family: 'Liberation Sans', 'Noto Sans CJK SC', sans-serif;
  font-size: 13px;
  color: #333;
`;

const Watermark = styled.div`
  position: absolute;
  right: 11px;
  bottom: 8px;
  display: flex;
  align-items: flex-end;
  opacity: 0.8;
`;

const WatermarkText = styled.div`
  display: flex;
  flex-direction: column;

  strong {
    font: 700 21px/23px 'Noto Sans CJK SC', sans-serif;
    color: #3a82c8;
  }

  em {
    font: 700 16px/18px 'Liberation Sans', sans-serif;
    color: #55b878;
  }
`;
